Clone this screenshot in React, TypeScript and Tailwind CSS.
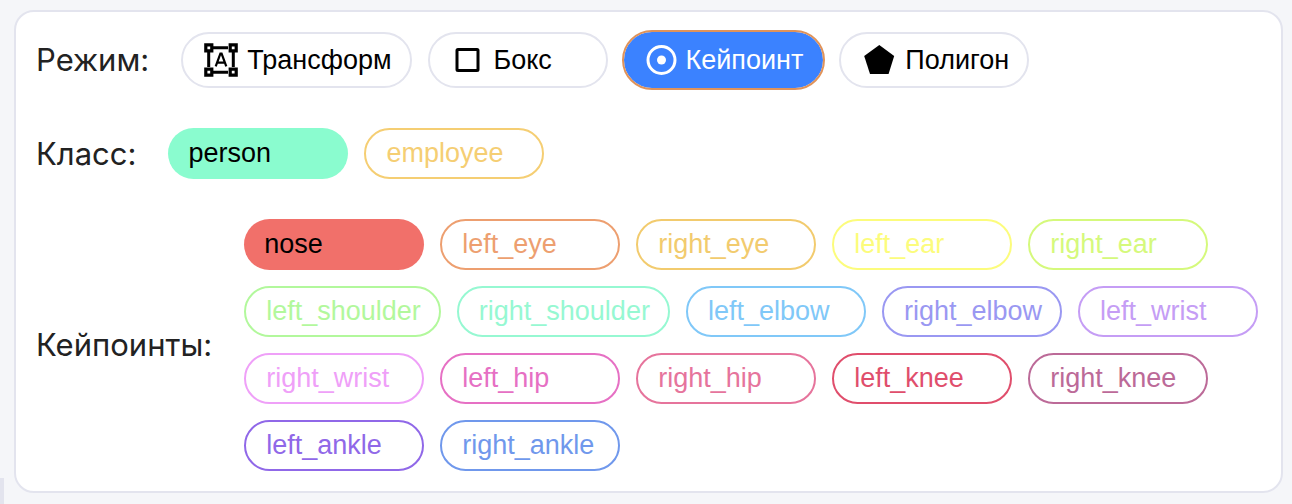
import { useState } from "react";
import type { ReactNode } from "react";

type Chip = { name: string; color: string };

const classes: Chip[] = [
  { name: "person", color: "text-[#8afccf]" },
  { name: "employee", color: "text-[#f5ce73]" },
];

const keypoints: Chip[] = [
  { name: "nose", color: "text-[#f1706a]" },
  { name: "left_eye", color: "text-[#ed9f70]" },
  { name: "right_eye", color: "text-[#f2cb6e]" },
  { name: "left_ear", color: "text-[#fcfc7c]" },
  { name: "right_ear", color: "text-[#d5f97c]" },
  { name: "left_shoulder", color: "text-[#b2f89c]" },
  { name: "right_shoulder", color: "text-[#96f8d2]" },
  { name: "left_elbow", color: "text-[#80c8f8]" },
  { name: "right_elbow", color: "text-[#9a98f2]" },
  { name: "left_wrist", color: "text-[#c59df5]" },
  { name: "right_wrist", color: "text-[#efa0f8]" },
  { name: "left_hip", color: "text-[#e670c4]" },
  { name: "right_hip", color: "text-[#e6749c]" },
  { name: "left_knee", color: "text-[#e04e6c]" },
  { name: "right_knee", color: "text-[#bc6a98]" },
  { name: "left_ankle", color: "text-[#9068e8]" },
  { name: "right_ankle", color: "text-[#7098ec]" },
];

const TransformIcon = () => (
  <svg width="36" height="36" viewBox="0 0 36 36" fill="none" stroke="currentColor" aria-hidden="true">
    <path strokeWidth="3" d="M10 5.7h15M10 30.3h15M5.7 10v15M30.3 10v15" />
    <path
      strokeWidth="3.2"
      d="M2.8 2.8h6v6h-6zM27.2 2.8h6v6h-6zM2.8 27.2h6v6h-6zM27.2 27.2h6v6h-6z"
    />
    <path strokeWidth="2.2" d="M12.7 24.4 17.4 11.6h1.2l4.7 12.8M14.2 20.6h7.6" />
  </svg>
);

const BoxIcon = () => (
  <svg width="36" height="36" viewBox="0 0 36 36" fill="none" stroke="currentColor" aria-hidden="true">
    <rect x="7" y="7.5" width="21" height="21" rx="1" strokeWidth="3" />
  </svg>
);

const KeypointIcon = () => (
  <svg width="32" height="36" viewBox="0 0 32 36" fill="none" stroke="currentColor" aria-hidden="true">
    <circle cx="15.5" cy="18" r="13.5" strokeWidth="3" />
    <circle cx="15.5" cy="18" r="4.5" fill="currentColor" stroke="none" />
  </svg>
);

const PolygonIcon = () => (
  <svg width="36" height="36" viewBox="0 0 36 36" fill="currentColor" aria-hidden="true">
    <path d="M18.3 3 33.2 14 27.6 32H9L3.2 14z" />
  </svg>
);

const modes = [
  { name: "Трансформ", icon: <TransformIcon /> },
  { name: "Бокс", icon: <BoxIcon /> },
  { name: "Кейпоинт", icon: <KeypointIcon /> },
  { name: "Полигон", icon: <PolygonIcon /> },
];

const Row = ({ label, children }: { label: string; children: ReactNode }) => (
  <div role="group" aria-label={label} className="flex items-center gap-8">
    <span className="shrink-0 font-[Inter,sans-serif] text-[31px] leading-10 text-[#222222]">
      {label}:
    </span>
    <div className="flex flex-wrap gap-4">{children}</div>
  </div>
);

const ChipButton = ({
  chip,
  active,
  onClick,
}: {
  chip: Chip;
  active: boolean;
  onClick: () => void;
}) => (
  <button
    type="button"
    aria-pressed={active}
    onClick={onClick}
    className={`min-w-[180px] cursor-pointer rounded-full py-2 pr-[18px] pl-5 text-left text-[27px] leading-[31px] ${chip.color} ${
      active ? "bg-current" : "border-2 border-current"
    }`}
  >
    <span className={active ? "text-black" : ""}>{chip.name}</span>
  </button>
);

export default function App() {
  const [mode, setMode] = useState("Кейпоинт");
  const [activeClass, setActiveClass] = useState("person");
  const [keypoint, setKeypoint] = useState("nose");

  return (
    <div className="relative min-h-screen bg-[#f5f6f9] pt-[10px] pr-[9px] pb-3 pl-[14px] font-['Liberation_Sans',Arial,sans-serif]">
      <main className="flex flex-col gap-10 rounded-[20px] border-2 border-[#e3e4ee] bg-white p-5">
        <Row label="Режим">
          {modes.map((m) => (
            <button
              key={m.name}
              type="button"
              aria-pressed={mode === m.name}
              onClick={() => setMode(m.name)}
              className={`flex min-w-[180px] cursor-pointer items-center gap-2 rounded-full border-2 py-2 pr-[18px] pl-5 text-[27px] leading-[31px] ${
                mode === m.name
                  ? "border-[#3b82ff] bg-[#3b82ff] text-white outline-2 outline-[#e0935a]"
                  : "border-[#e3e4ee] text-black"
              }`}
            >
              {m.icon}
              {m.name}
            </button>
          ))}
        </Row>

        <Row label="Класс">
          {classes.map((c) => (
            <ChipButton
              key={c.name}
              chip={c}
              active={activeClass === c.name}
              onClick={() => setActiveClass(c.name)}
            />
          ))}
        </Row>

        <Row label="Кейпоинты">
          {keypoints.map((k) => (
            <ChipButton
              key={k.name}
              chip={k}
              active={keypoint === k.name}
              onClick={() => setKeypoint(k.name)}
            />
          ))}
        </Row>
      </main>

      {/* edge of the neighbouring panel */}
      <div className="absolute bottom-0 left-0 h-[27px] w-1 bg-[#e3e4ee]" />
    </div>
  );
}
